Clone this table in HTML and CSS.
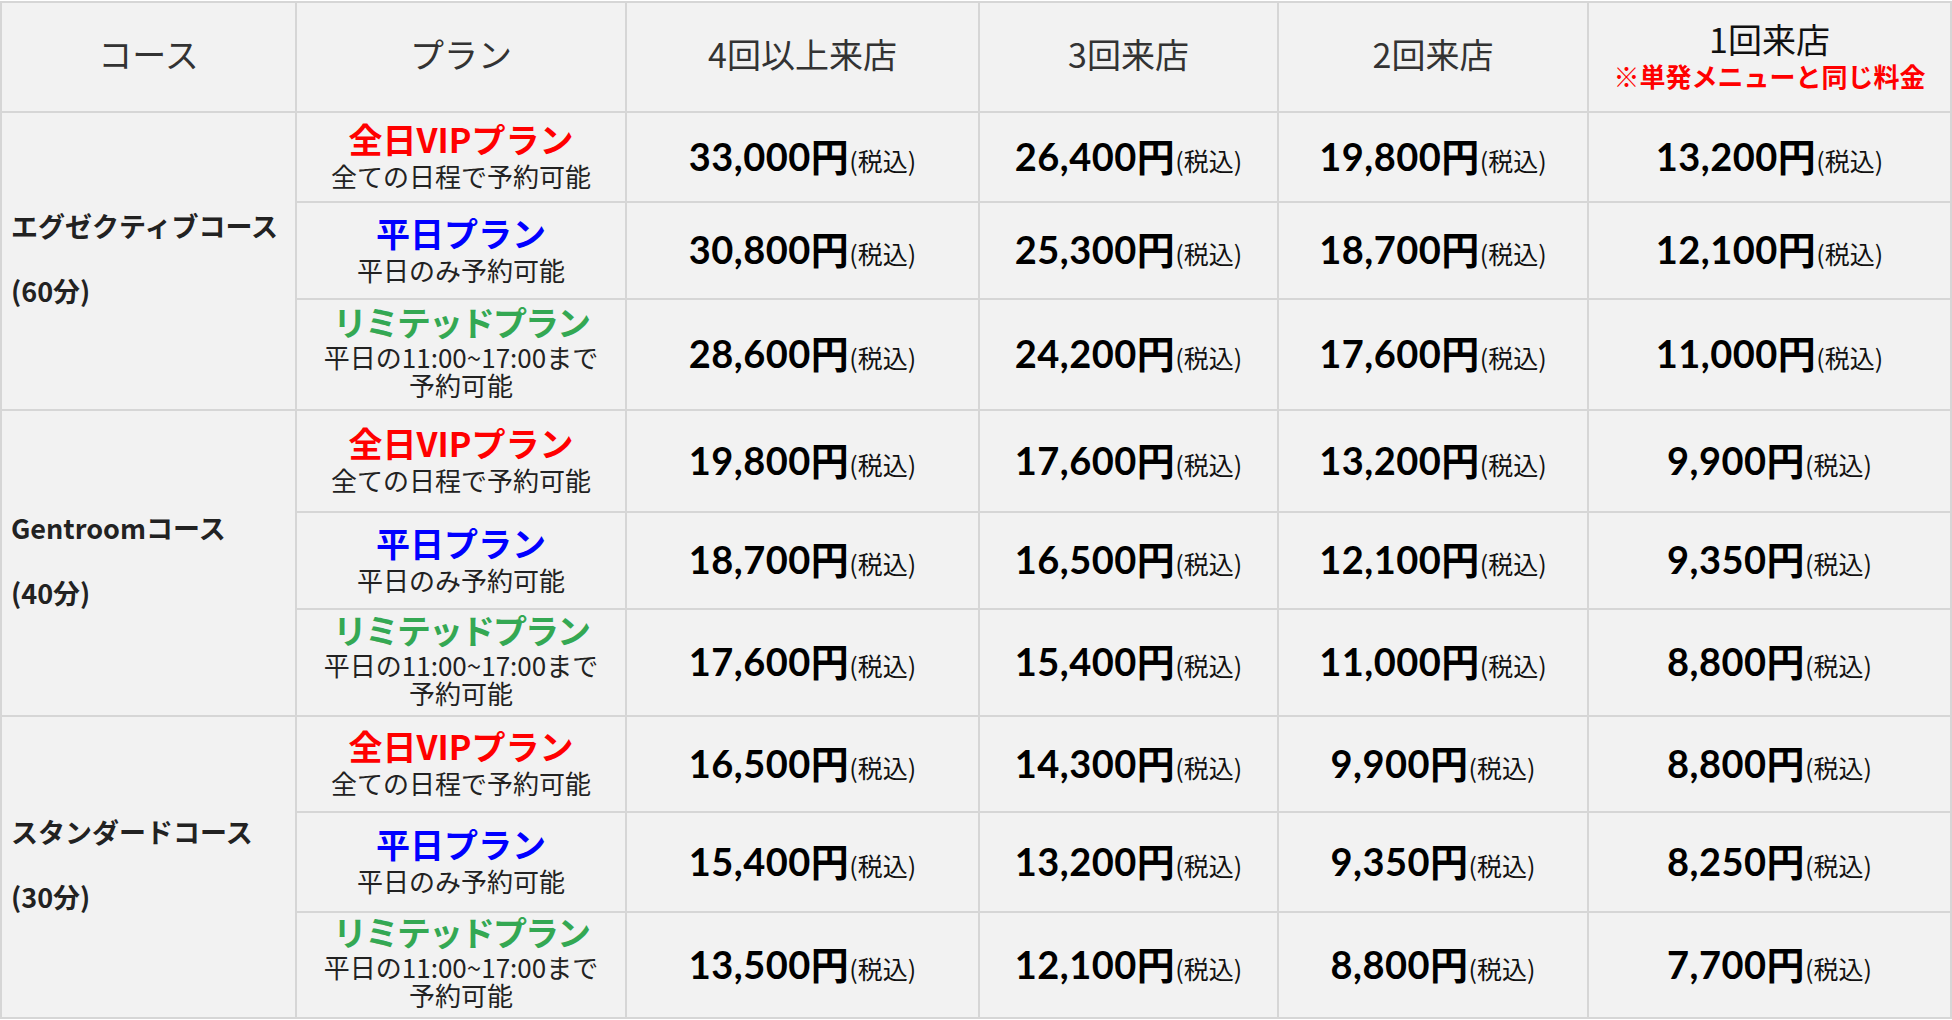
FILE: index.html
```html
<!DOCTYPE html>
<html lang="ja">
<head>
<meta charset="utf-8">
<title>料金表</title>
<link rel="stylesheet" href="styles.css">
</head>
<body>
<table class="price-table">
  <thead>
    <tr class="r-head">
      <th class="w-course">コース</th>
      <th class="w-plan">プラン</th>
      <th class="w-p4">4回以上来店</th>
      <th class="w-p3">3回来店</th>
      <th class="w-p2">2回来店</th>
      <th class="w-p1"><span class="first">1回来店</span><span class="note">※単発メニューと同じ料金</span></th>
    </tr>
  </thead>
  <tbody>
    <tr class="r1">
      <td class="course" rowspan="3">エグゼクティブコース<br><br>(60分)</td>
      <td class="plan"><span class="pname vip">全日VIPプラン</span><span class="pdesc">全ての日程で予約可能</span></td>
      <td class="price"><span class="num">33,000円</span><span class="tax">(税込)</span></td>
      <td class="price"><span class="num">26,400円</span><span class="tax">(税込)</span></td>
      <td class="price"><span class="num">19,800円</span><span class="tax">(税込)</span></td>
      <td class="price"><span class="num">13,200円</span><span class="tax">(税込)</span></td>
    </tr>
    <tr class="r2">
      <td class="plan"><span class="pname weekday">平日プラン</span><span class="pdesc">平日のみ予約可能</span></td>
      <td class="price"><span class="num">30,800円</span><span class="tax">(税込)</span></td>
      <td class="price"><span class="num">25,300円</span><span class="tax">(税込)</span></td>
      <td class="price"><span class="num">18,700円</span><span class="tax">(税込)</span></td>
      <td class="price"><span class="num">12,100円</span><span class="tax">(税込)</span></td>
    </tr>
    <tr class="r3">
      <td class="plan lim"><span class="pname limited">リミテッドプラン</span><span class="pdesc">平日の11:00~17:00まで<br>予約可能</span></td>
      <td class="price"><span class="num">28,600円</span><span class="tax">(税込)</span></td>
      <td class="price"><span class="num">24,200円</span><span class="tax">(税込)</span></td>
      <td class="price"><span class="num">17,600円</span><span class="tax">(税込)</span></td>
      <td class="price"><span class="num">11,000円</span><span class="tax">(税込)</span></td>
    </tr>
    <tr class="r4">
      <td class="course" rowspan="3">Gentroomコース<br><br>(40分)</td>
      <td class="plan"><span class="pname vip">全日VIPプラン</span><span class="pdesc">全ての日程で予約可能</span></td>
      <td class="price"><span class="num">19,800円</span><span class="tax">(税込)</span></td>
      <td class="price"><span class="num">17,600円</span><span class="tax">(税込)</span></td>
      <td class="price"><span class="num">13,200円</span><span class="tax">(税込)</span></td>
      <td class="price"><span class="num">9,900円</span><span class="tax">(税込)</span></td>
    </tr>
    <tr class="r5">
      <td class="plan"><span class="pname weekday">平日プラン</span><span class="pdesc">平日のみ予約可能</span></td>
      <td class="price"><span class="num">18,700円</span><span class="tax">(税込)</span></td>
      <td class="price"><span class="num">16,500円</span><span class="tax">(税込)</span></td>
      <td class="price"><span class="num">12,100円</span><span class="tax">(税込)</span></td>
      <td class="price"><span class="num">9,350円</span><span class="tax">(税込)</span></td>
    </tr>
    <tr class="r6">
      <td class="plan lim"><span class="pname limited">リミテッドプラン</span><span class="pdesc">平日の11:00~17:00まで<br>予約可能</span></td>
      <td class="price"><span class="num">17,600円</span><span class="tax">(税込)</span></td>
      <td class="price"><span class="num">15,400円</span><span class="tax">(税込)</span></td>
      <td class="price"><span class="num">11,000円</span><span class="tax">(税込)</span></td>
      <td class="price"><span class="num">8,800円</span><span class="tax">(税込)</span></td>
    </tr>
    <tr class="r7">
      <td class="course" rowspan="3">スタンダードコース<br><br>(30分)</td>
      <td class="plan"><span class="pname vip">全日VIPプラン</span><span class="pdesc">全ての日程で予約可能</span></td>
      <td class="price"><span class="num">16,500円</span><span class="tax">(税込)</span></td>
      <td class="price"><span class="num">14,300円</span><span class="tax">(税込)</span></td>
      <td class="price"><span class="num">9,900円</span><span class="tax">(税込)</span></td>
      <td class="price"><span class="num">8,800円</span><span class="tax">(税込)</span></td>
    </tr>
    <tr class="r8">
      <td class="plan"><span class="pname weekday">平日プラン</span><span class="pdesc">平日のみ予約可能</span></td>
      <td class="price"><span class="num">15,400円</span><span class="tax">(税込)</span></td>
      <td class="price"><span class="num">13,200円</span><span class="tax">(税込)</span></td>
      <td class="price"><span class="num">9,350円</span><span class="tax">(税込)</span></td>
      <td class="price"><span class="num">8,250円</span><span class="tax">(税込)</span></td>
    </tr>
    <tr class="r9">
      <td class="plan lim"><span class="pname limited">リミテッドプラン</span><span class="pdesc">平日の11:00~17:00まで<br>予約可能</span></td>
      <td class="price"><span class="num">13,500円</span><span class="tax">(税込)</span></td>
      <td class="price"><span class="num">12,100円</span><span class="tax">(税込)</span></td>
      <td class="price"><span class="num">8,800円</span><span class="tax">(税込)</span></td>
      <td class="price"><span class="num">7,700円</span><span class="tax">(税込)</span></td>
    </tr>
  </tbody>
</table>
</body>
</html>
```
FILE: styles.css
```css
* {
  box-sizing: border-box;
}

html,
body {
  margin: 0;
  padding: 0;
  background: #ffffff;
}

body {
  font-family: "Noto Sans CJK JP", "Noto Sans", sans-serif;
  color: #222222;
}

.price-table {
  border-collapse: separate;
  border-spacing: 0;
  table-layout: fixed;
  width: 1952px;
  margin-top: 1px;
  border-top: 2px solid #d6d6d6;
  border-left: 2px solid #d6d6d6;
  background: #f2f2f2;
}

.price-table th,
.price-table td {
  border-right: 2px solid #d6d6d6;
  border-bottom: 2px solid #d6d6d6;
  padding: 0 0 6px 0;
  text-align: center;
  vertical-align: middle;
}

.w-course { width: 295px; }
.w-plan { width: 330px; }
.w-p4 { width: 353px; }
.w-p3 { width: 299px; }
.w-p2 { width: 310px; }
.w-p1 { width: 363px; }

.r-head { height: 110px; }
.r1 { height: 90px; }
.r2 { height: 97px; }
.r3 { height: 111px; }
.r4 { height: 102px; }
.r5 { height: 97px; }
.r6 { height: 107px; }
.r7 { height: 96px; }
.r8 { height: 100px; }
.r9 { height: 106px; }

.price-table th {
  font-size: 34px;
  font-weight: 400;
  color: #333333;
  line-height: 44px;
}

.first {
  display: block;
  color: #111111;
}

.note {
  display: block;
  font-size: 26px;
  line-height: 30px;
  font-weight: 700;
  color: #ff0000;
}

.price-table td.course {
  text-align: left;
  padding: 0 0 4px 9px;
  font-size: 27px;
  line-height: 32.5px;
  font-weight: 700;
  color: #222222;
}

.pname {
  display: block;
  font-size: 34px;
  line-height: 44px;
  font-weight: 700;
}

.vip { color: #ff0000; }
.weekday { color: #0000ff; }
.limited {
  color: #34a853;
  letter-spacing: -2px;
}

.pdesc {
  display: block;
  font-size: 26px;
  line-height: 30px;
  color: #222222;
}

.lim .pname {
  line-height: 42px;
  margin-top: -4px;
}

.lim .pdesc {
  line-height: 28px;
}

.price {
  white-space: nowrap;
  color: #000000;
}

.num {
  font-family: "Lato", "Noto Sans CJK JP", sans-serif;
  font-size: 38px;
  font-weight: 700;
  letter-spacing: 0.5px;
}

.tax {
  font-size: 25px;
  font-weight: 400;
  color: #111111;
}
```
